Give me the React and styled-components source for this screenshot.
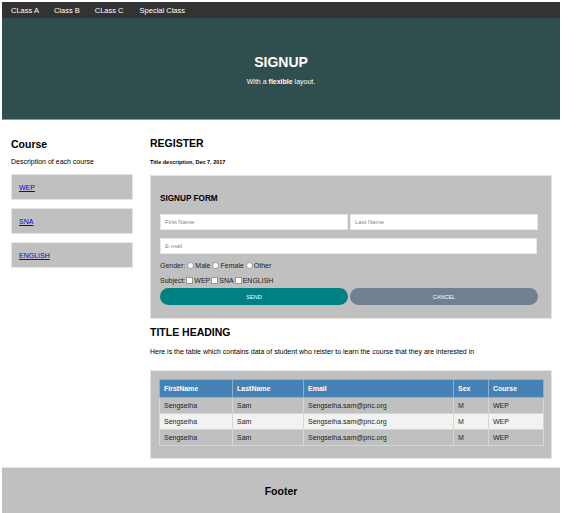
import styled, { createGlobalStyle } from "styled-components";

const GlobalStyle = createGlobalStyle`
  body {
    margin: 2px 2px 0 2px;
    font-family: "Liberation Sans", Arial, sans-serif;
    background: #fff;
    color: #000;
  }
`;

const Nav = styled.nav`
  display: flex;
  height: 16px;
  align-items: center;
  background: #333;
  padding-left: 9px;
`;

const NavLink = styled.a`
  color: #fff;
  font-size: 7.5px;
  text-decoration: none;
  padding-right: ${(props) => props.pad || 14}px;
`;

const Header = styled.header`
  height: 101px;
  background: #2f4f4f;
  border-bottom: 1px solid #8a9a9a;
  color: #fff;
  display: flex;
  flex-direction: column;
  align-items: center;
  justify-content: center;
`;

const HeaderTitle = styled.h1`
  margin: 2px 0 8px 0;
  font-size: 14px;
  font-weight: bold;
`;

const HeaderText = styled.p`
  margin: 0;
  font-size: 7px;
`;

const Body = styled.div`
  display: flex;
`;

const Side = styled.aside`
  flex: 0 0 122px;
  padding: 18px 9px 0 9px;
`;

const SideTitle = styled.h2`
  margin: 0 0 8px 0;
  font-size: 10.5px;
  font-weight: bold;
`;

const SmallText = styled.p`
  margin: 0 0 ${(props) => props.mb || 6}px 0;
  font-size: 7px;
`;

const CourseBox = styled.div`
  background: #c0c0c0;
  height: 26px;
  padding-left: 7px;
  margin-bottom: 8px;
  display: flex;
  align-items: center;
  border: 1px solid #e4e4e4;
  box-sizing: border-box;
`;

const CourseLink = styled.a`
  color: #0000ee;
  font-size: 7px;
  text-decoration: underline;
`;

const Main = styled.main`
  flex: 1;
  min-width: 0;
  padding: 17px 8px 0 8px;
`;

const Heading = styled.h2`
  margin: 0 0 ${(props) => props.gap || 8}px 0;
  font-size: 10.5px;
  font-weight: bold;
`;

const DateLine = styled.h5`
  margin: 0 0 10px 0;
  font-size: 5.5px;
  font-weight: bold;
`;

const Panel = styled.div`
  background: #c0c0c0;
  padding: ${(props) => props.pad || "9px"};
  border: 1px solid #e4e4e4;
  margin-bottom: ${(props) => props.mb || 0}px;
`;

const FormTitle = styled.h3`
  margin: 9px 0 11px 0;
  font-size: 8.2px;
  font-weight: bold;
`;

const InputRow = styled.div`
  display: flex;
  gap: 2px;
  width: 378px;
  margin-bottom: ${(props) => props.mb || 8}px;
`;

const Input = styled.input`
  flex: 1;
  min-width: 0;
  height: 16px;
  box-sizing: border-box;
  border: 1px solid #e8e8e8;
  background: #fff;
  font-family: inherit;
  font-size: 6px;
  padding: 0 4px;
  &::placeholder {
    color: #888;
  }
`;

const OptionLine = styled.div`
  display: flex;
  align-items: center;
  font-size: 7px;
  color: #222;
  height: ${(props) => props.h || 14}px;
`;

const Radio = styled.span`
  display: inline-block;
  width: 5px;
  height: 5px;
  border-radius: 50%;
  background: #fff;
  border: 0.5px solid #999;
  margin: 0 1px 0 2px;
`;

const Check = styled.span`
  display: inline-block;
  width: 5px;
  height: 5px;
  background: #fff;
  border: 0.5px solid #999;
  margin: 0 1px;
`;

const ButtonRow = styled.div`
  display: flex;
  gap: 2px;
  width: 378px;
  margin-bottom: 4px;
`;

const Button = styled.button`
  flex: 1;
  height: 17px;
  border: none;
  border-radius: 9px;
  color: #fff;
  font-family: inherit;
  font-size: 5.5px;
  background: ${(props) => (props.cancel ? "#708090" : "#008080")};
`;

const Table = styled.table`
  width: 100%;
  table-layout: fixed;
  border-collapse: collapse;
  font-size: 7px;
`;

const Th = styled.th`
  box-sizing: border-box;
  background: #4682b4;
  color: #fff;
  text-align: left;
  height: 18px;
  padding: 0 4px;
  border: 1px solid #8fb0cc;
  width: ${(props) => props.w}px;
`;

const Td = styled.td`
  height: 15px;
  padding: 0 4px;
  border: 1px solid #d6d6d6;
  color: #222;
  white-space: nowrap;
`;

const Tr = styled.tr`
  background: ${(props) => (props.light ? "#f2f2f2" : "#c0c0c0")};
`;

const Footer = styled.footer`
  margin-top: 8px;
  height: 46px;
  background: #c0c0c0;
  border-top: 1px solid #e4e4e4;
  display: flex;
  align-items: center;
  justify-content: center;
  font-size: 10.5px;
  font-weight: bold;
`;

const rows = [0, 1, 2];

export default function App() {
  return (
    <>
      <GlobalStyle />
      <Nav>
        <NavLink pad={15}>CLass A</NavLink>
        <NavLink pad={15}>Class B</NavLink>
        <NavLink pad={16}>CLass C</NavLink>
        <NavLink>Special Class</NavLink>
      </Nav>
      <Header>
        <HeaderTitle>SIGNUP</HeaderTitle>
        <HeaderText>
          With a <b>flexible</b> layout.
        </HeaderText>
      </Header>
      <Body>
        <Side>
          <SideTitle>Course</SideTitle>
          <SmallText mb={9}>Description of each course</SmallText>
          <CourseBox>
            <CourseLink href="#">WEP</CourseLink>
          </CourseBox>
          <CourseBox>
            <CourseLink href="#">SNA</CourseLink>
          </CourseBox>
          <CourseBox>
            <CourseLink href="#">ENGLISH</CourseLink>
          </CourseBox>
        </Side>
        <Main>
          <Heading gap={10}>REGISTER</Heading>
          <DateLine>Title description, Dec 7, 2017</DateLine>
          <Panel mb={7}>
            <FormTitle>SIGNUP FORM</FormTitle>
            <InputRow>
              <Input placeholder="First Name" />
              <Input placeholder="Last Name" />
            </InputRow>
            <InputRow mb={3}>
              <Input placeholder="E-mail" style={{ marginRight: 1 }} />
            </InputRow>
            <OptionLine h={16}>
              Gender:<Radio />Male<Radio />Female<Radio />Other
            </OptionLine>
            <OptionLine h={15}>
              Subject:<Check />WEP<Check />SNA<Check />ENGLISH
            </OptionLine>
            <ButtonRow>
              <Button>SEND</Button>
              <Button cancel>CANCEL</Button>
            </ButtonRow>
          </Panel>
          <Heading gap={10}>TITLE HEADING</Heading>
          <SmallText mb={15}>
            Here is the table which contains data of student who reister to learn the course that they are interested in
          </SmallText>
          <Panel pad="8px 8px 12px 8px">
            <Table>
              <thead>
                <tr>
                  <Th w={73}>FirstName</Th>
                  <Th w={71}>LastName</Th>
                  <Th w={150}>Email</Th>
                  <Th w={35}>Sex</Th>
                  <Th w={55}>Course</Th>
                </tr>
              </thead>
              <tbody>
                {rows.map((i) => (
                  <Tr key={i} light={i === 1}>
                    <Td>Sengseiha</Td>
                    <Td>Sam</Td>
                    <Td>Sengseiha.sam@pnc.org</Td>
                    <Td>M</Td>
                    <Td>WEP</Td>
                  </Tr>
                ))}
              </tbody>
            </Table>
          </Panel>
        </Main>
      </Body>
      <Footer>Footer</Footer>
    </>
  );
}
